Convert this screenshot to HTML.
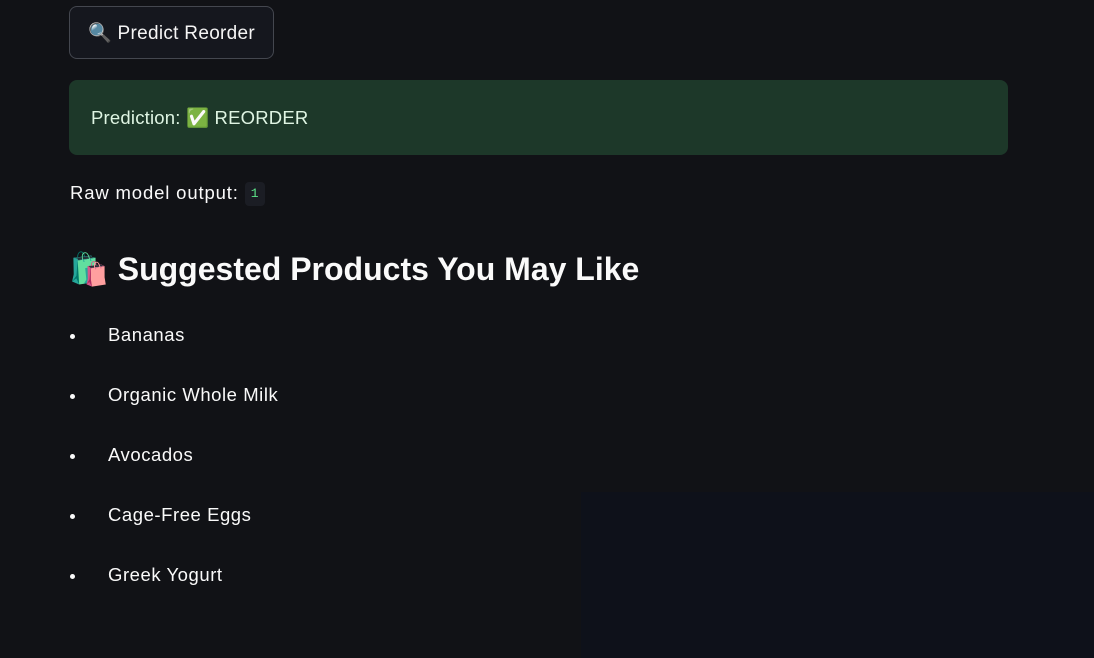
<!DOCTYPE html>
<html><head><meta charset="utf-8"><style>
html,body{margin:0;width:1094px;height:658px;overflow:hidden;background:#111216;font-family:"Liberation Sans","Noto Sans CJK JP",sans-serif;color:#fafafa}
.btn{position:absolute;left:69px;top:6px;width:205px;height:53px;border:1px solid #44474f;border-radius:8px;background:#15171e;box-sizing:border-box;display:flex;align-items:center;justify-content:center;font-size:19px;color:#f5f5f5;letter-spacing:0.3px}
.ok{position:absolute;left:69px;top:80px;width:939px;height:75px;background:#1d3829;border-radius:8px;font-size:18.5px;color:#dff5e3;box-sizing:border-box;padding-left:22px;line-height:75px;letter-spacing:0.2px}
.raw{position:absolute;left:70px;top:180px;font-size:18.5px;line-height:26px;letter-spacing:0.85px}
.code{display:inline-block;background:#1b1d24;color:#5ce488;font-family:"Liberation Mono",monospace;font-size:13px;line-height:16px;padding:4px 6px;border-radius:4px;vertical-align:middle;letter-spacing:0}
h2{position:absolute;left:69px;top:248px;margin:0;font-size:32px;font-weight:bold;line-height:42px}
ul{position:absolute;left:70px;top:320px;margin:0;padding:0;list-style:none}
li{height:60px;font-size:18.5px;line-height:30px;position:relative;padding-left:38px;letter-spacing:0.55px}
li:before{content:"";position:absolute;left:0;top:14px;width:5px;height:5px;border-radius:50%;background:#fafafa}
.panel{position:absolute;left:581px;top:492px;right:0;bottom:0;background:#0e111a}
</style></head><body>
<div class="panel"></div>
<div class="btn">🔍&nbsp;Predict Reorder</div>
<div class="ok">Prediction: ✅ REORDER</div>
<div class="raw">Raw model output: <span class="code">1</span></div>
<h2>🛍️ Suggested Products You May Like</h2>
<ul><li>Bananas</li><li>Organic Whole Milk</li><li>Avocados</li><li>Cage-Free Eggs</li><li>Greek Yogurt</li></ul>
</body></html>
